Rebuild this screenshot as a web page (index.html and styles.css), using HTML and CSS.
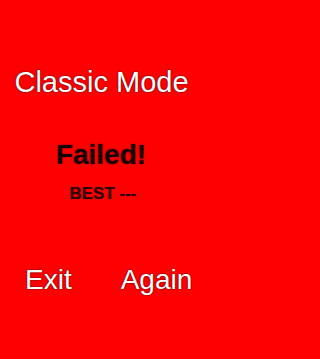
FILE: index.html
```html
<!DOCTYPE html>
<html>
<head>
<meta charset="utf-8">
<link rel="stylesheet" href="styles.css">
</head>
<body>
<main class="screen">
  <h1 class="title">Classic Mode</h1>
  <h2 class="status">Failed!</h2>
  <p class="best">BEST ---</p>
  <nav class="actions">
    <span class="action">Exit</span>
    <span class="action">Again</span>
  </nav>
</main>
</body>
</html>
```

FILE: styles.css
```css
html, body {
  margin: 0;
  padding: 0;
  background: #ff0000;
}
.screen {
  width: 202px;
  height: 359px;
  display: flex;
  flex-direction: column;
  align-items: center;
  padding-top: 68px;
  box-sizing: border-box;
  font-family: "Liberation Sans", Arial, sans-serif;
}
.title {
  margin: 0 0 0 1px;
  font-size: 29px;
  line-height: 29px;
  font-weight: normal;
  color: #ffffff;
  text-shadow: 0 0 2px rgba(90, 0, 0, 1), 0 0 1px rgba(90, 0, 0, 0.8);
}
.status {
  margin: 44px 0 0 0;
  font-size: 28px;
  line-height: 28px;
  font-weight: bold;
  color: #140000;
  text-shadow: 0 0 2px rgba(60, 0, 0, 0.6);
}
.best {
  margin: 16px 0 0 4px;
  font-size: 17px;
  line-height: 17px;
  font-weight: bold;
  color: #2a0000;
  text-shadow: 0 0 1px rgba(60, 0, 0, 0.5);
}
.actions {
  margin-top: 64px;
  align-self: stretch;
  display: flex;
  padding-left: 25px;
  gap: 49px;
}
.action {
  font-size: 28px;
  line-height: 28px;
  color: #ffffff;
  text-shadow: 0 0 2px rgba(90, 0, 0, 1), 0 0 1px rgba(90, 0, 0, 0.8);
}
```
